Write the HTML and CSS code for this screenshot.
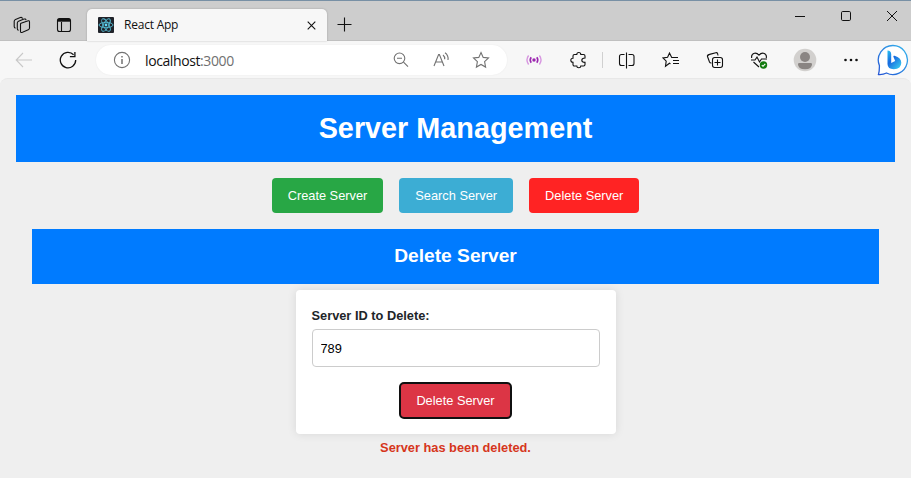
FILE: index.html
```html
<!DOCTYPE html>
<html lang="en">
<head>
<meta charset="utf-8">
<title>React App</title>
<link rel="stylesheet" href="styles.css">
</head>
<body>
<header class="browser">
  <div class="tabbar">
    <div class="tab-tools">
      <svg class="icon workspaces" viewBox="0 0 18 18"><path d="M8 7.300l6.500-2.400q2-.7 2 1.100v6q0 1.200-1.200 1.700l-5.800 2.600q-2 .8-2-1V8.300q0-.7.5-1z"/><path d="M13 4.200q-.3-1.700-2-1.100L5.500 5.200Q4.300 5.700 4.300 7v5.800q0 1.300 1.400 1.500M9.600 2.600q-.6-1.600-2.300-1L2.500 3.400Q1.200 3.900 1.200 5.300v5.200q0 1.300 1.300 1.600"/></svg>
      <svg class="icon" viewBox="0 0 16 16"><rect x="1.500" y="1.500" width="13" height="13" rx="2"/><path d="M5.500 5v9"/><path d="M2 3.300h12" stroke-width="2.800"/></svg>
    </div>
    <div class="tab">
      <svg class="favicon" viewBox="0 0 16 16"><rect width="16" height="16" rx="1" fill="#20232a"/><g fill="none" stroke="#55bdd5" stroke-width=".9"><ellipse cx="8" cy="8" rx="7" ry="2.700"/><ellipse cx="8" cy="8" rx="7" ry="2.700" transform="rotate(60 8 8)"/><ellipse cx="8" cy="8" rx="7" ry="2.700" transform="rotate(120 8 8)"/></g><circle cx="8" cy="8" r="1.400" fill="#61dafb"/></svg>
      <span class="tab-title">React App</span>
      <svg class="tab-close" viewBox="0 0 9 9"><path d="M.7.7l7.600 7.600M8.300.7L.7 8.300"/></svg>
    </div>
    <svg class="new-tab" viewBox="0 0 15 15"><path d="M7.500.5v14M.5 7.500h14"/></svg>
    <div class="window-controls">
      <svg viewBox="0 0 12 12"><path d="M1 6.500h10"/></svg>
      <svg viewBox="0 0 12 12"><rect x="1.500" y="1.500" width="9" height="9" rx="1.200"/></svg>
      <svg viewBox="0 0 12 12"><path d="M1 1l10 10M11 1L1 11"/></svg>
    </div>
  </div>
  <div class="toolbar">
    <svg class="back" viewBox="0 0 18 18"><path d="M17 9H1.500M8 2L1.200 9 8 16"/></svg>
    <svg class="reload" viewBox="0 0 18 18"><path d="M16.700 9A7.700 7.700 0 1 1 14.600 3.800M15.900 1v4.600h-5"/></svg>
    <div class="address">
      <svg class="info" viewBox="0 0 18 18"><circle cx="9" cy="9" r="7.600"/><path d="M9 8v5M9 5v1.500" stroke-width="1.500"/></svg>
      <span class="url">localhost<span class="port">:3000</span></span>
      <div class="address-tools">
        <svg viewBox="0 0 18 18"><circle cx="7.500" cy="7.300" r="5.300"/><path d="M5 7.300h5M11.500 11.200l4.500 4.500"/></svg>
        <svg viewBox="0 0 18 18"><path d="M2 15L6.600 3.500h.8L12 15M3.700 11h6.600M11 4q2 1.600 1.700 4.200M13 1.800q3.700 2.700 3 7.200"/></svg>
        <svg viewBox="0 0 18 18"><path d="M9 1.500l2.200 4.900 5.300.6-3.900 3.700 1 5.400L9 13.500l-4.600 2.600 1-5.400L1.500 7l5.300-.6z"/></svg>
      </div>
    </div>
    <div class="actions">
      <div class="slot"><svg class="broadcast" viewBox="0 0 18 18"><circle cx="9" cy="9" r="1.700" fill="#9c27b0" stroke="none"/><path d="M6.200 6.300q-2 2.700 0 5.400M11.800 6.300q2 2.700 0 5.400" stroke-width="1.600"/><path class="faint" d="M3.600 4.500q-3.300 4.500 0 9M14.400 4.500q3.300 4.500 0 9" stroke-width="1.400"/></svg></div>
      <div class="slot"><svg viewBox="0 0 18 18"><path d="M5.500 3.500h2.300q0-2 2-2t2 2h2.700q1.500 0 1.500 1.500v2q-3.200 0-3.200 2.200t3.200 2.200V13.500q0 1.500-1.500 1.500h-2.700q0 1.800-2 1.800t-2-1.800H5.500Q4 15 4 13.500V11.200q-2.200 0-2.200-2T4 7.200V5q0-1.500 1.500-1.500z"/></svg></div>
      <span class="divider"></span>
      <div class="slot"><svg viewBox="0 0 18 18"><path d="M6.500 3.500H3.500Q1.500 3.500 1.500 5.500v7q0 2 2 2h3M10.500 3.500h3.500q2 0 2 2v7q0 2-2 2h-3.500M8.500 1.500v16"/></svg></div>
      <div class="slot"><svg viewBox="0 0 18 18"><path d="M8.500 12.700L7.500 12.200l-4 3 .7-5.100L1 7l4.600-.7L7.500 2l2.200 4.500H16M11 9.500h6M11 12.500h6"/></svg></div>
      <div class="slot"><svg viewBox="0 0 18 18"><rect x="6.500" y="6.500" width="10" height="10" rx="2.200"/><path d="M11.500 8.500v6M8.500 11.500h6M12 4.500l-.4-1.800q-.4-1.300-1.800-1L3.600 3.400q-1.300.4-2 1.700M1.300 5l2.200 6q.5 1.200 2 1M1.300 5q.2-1.200 1.300-1.500"/></svg></div>
      <div class="slot"><svg viewBox="0 0 18 18"><path d="M1.700 7Q1 3 4.500 2.200 7 1.800 9 4.200q2-2.400 4.500-2Q17 3 16.300 7M1 9h4l2-3 2.500 5 2-3H17M3.500 11l5.500 5"/><circle cx="13.500" cy="14" r="3.700" fill="#137b10" stroke="none"/><path d="M11.800 14.200l1.200 1.100 2.300-2.500" stroke="#fff"/></svg></div>
      <div class="slot avatar-slot"><svg class="avatar" viewBox="0 0 24 24"><circle cx="12" cy="12" r="11.300" fill="#d2d0ce"/><circle cx="12" cy="9" r="5" fill="#8a8583"/><path d="M5 16.200q0-1.200 1.200-1.200h11.600q1.200 0 1.200 1.200 0 5-7 5t-7-5z" fill="#8a8583"/></svg></div>
      <div class="slot dots-slot"><svg viewBox="0 0 18 18"><g fill="#111" stroke="none"><circle cx="3.500" cy="9" r="1.300"/><circle cx="9" cy="9" r="1.300"/><circle cx="14.500" cy="9" r="1.300"/></g></svg></div>
      <svg class="bing" viewBox="0 0 32 32"><defs><linearGradient id="rim" x1="1" y1="0" x2="0" y2="1"><stop stop-color="#35b7ee"/><stop offset="1" stop-color="#2454d4"/></linearGradient><linearGradient id="bee" x1="0" y1="0" x2=".8" y2="1"><stop stop-color="#29c2f2"/><stop offset=".45" stop-color="#1769df"/><stop offset="1" stop-color="#38c9ef"/></linearGradient></defs><path d="M16 1.500a14.500 14.500 0 1 1-6.500 27.500q-3.500 1.800-8 1.500 1-3.500.9-9A14.500 14.500 0 0 1 16 1.500z" fill="#fff" stroke="url(#rim)" stroke-width="1.300"/><path d="M10.500 6.500q3.500.4 3.700 3.500v9l4-2-1.800-4.200q-.4-1.600 1.200-1 6.700 2 6.700 7 0 6.200-7.600 6.400-6 0-6.200-5.200z" fill="url(#bee)"/></svg>
    </div>
  </div>
</header>
<main class="page">
  <h1 class="page-title">Server Management</h1>
  <nav class="menu">
    <button class="btn create">Create Server</button>
    <button class="btn search">Search Server</button>
    <button class="btn delete">Delete Server</button>
  </nav>
  <section class="delete-view">
    <h2 class="section-title">Delete Server</h2>
    <form class="card">
      <label class="label" for="server-id">Server ID to Delete:</label>
      <input class="input" id="server-id" type="text" value="789">
      <button class="btn submit" type="button">Delete Server</button>
    </form>
    <p class="message">Server has been deleted.</p>
  </section>
</main>
</body>
</html>
```
FILE: styles.css
```css
* { box-sizing: border-box; }
body {
  margin: 0;
  height: 478px;
  overflow: hidden;
  background: #f7f7f7;
  font-family: "Liberation Sans", Arial, sans-serif;
}
svg { display: block; flex: none; fill: none; stroke: #111; stroke-width: 1.1; }

.browser { font-family: "Noto Sans", "Open Sans", sans-serif; }
.tabbar {
  display: flex;
  height: 41px;
  background: #cdcdcd;
  border-top: 1px solid #7890a5;
  border-bottom: 1px solid #c0c0c0;
}
.tab-tools { display: flex; align-items: center; width: 87px; padding: 8px 0 0 13px; gap: 25px; }
.icon { width: 16px; height: 16px; }
.icon.workspaces { width: 18px; height: 18px; }
.tab {
  display: flex;
  align-items: center;
  width: 240px;
  height: 32px;
  margin-top: 8px;
  padding: 0 11px;
  border-radius: 5px 5px 0 0;
  background: #f7f7f7;
  box-shadow: 0 0 2px rgba(0, 0, 0, .25);
}
.favicon { width: 16px; height: 16px; stroke: none; }
.tab-title { margin-left: 10px; padding-bottom: 2px; font-family: "Open Sans", sans-serif; font-size: 12px; letter-spacing: -.22px; color: #111; }
.tab-close { width: 9px; height: 9px; margin-left: auto; }
.new-tab { width: 15px; height: 15px; margin: 16px 0 0 10px; }
.window-controls { display: flex; gap: 34px; margin: 9px 13px 0 auto; }
.window-controls svg { width: 12px; height: 12px; stroke-width: 1; }

.toolbar { display: flex; height: 37px; align-items: center; padding: 1px 0 0 15px; background: #f7f7f7; }
.back { width: 18px; height: 18px; stroke: #c8c8c8; }
.reload { width: 18px; height: 18px; margin-left: 26px; stroke-width: 1.3; }
.address {
  display: flex;
  align-items: center;
  width: 411px;
  height: 30px;
  margin-left: 19px;
  padding: 0 17px;
  border-radius: 15px;
  background: #fff;
  box-shadow: 0 0 2px rgba(0, 0, 0, .06);
}
.address svg { width: 18px; height: 18px; stroke: #727272; }
.url { margin-left: 14px; font-family: "Open Sans", sans-serif; font-size: 14px; letter-spacing: -.4px; color: #111; }
.port { color: #707070; }
.address-tools { display: flex; gap: 22px; margin-left: auto; }
.actions { display: flex; align-items: center; margin-left: 5px; }
.slot { display: flex; justify-content: center; width: 44px; }
.slot svg { width: 18px; height: 18px; }
.slot .broadcast { stroke: #9c27b0; }
.broadcast .faint { stroke: #d796e0; }
.slot .avatar { width: 24px; height: 24px; stroke: none; }
.avatar-slot, .dots-slot { margin-left: 2px; }
.divider { width: 1px; height: 16px; margin: 0 2px; background: #d0d0d0; }
.bing { width: 32px; height: 32px; margin-left: 4px; stroke: none; }

.page {
  height: 400px;
  padding: 16px;
  border: solid #e8e8e8;
  border-width: 1px 0 0;
  border-radius: 8px 8px 0 0;
  background: #efefef;
}
.page-title {
  height: 67px;
  margin: 0;
  background: #007bff;
  color: #fff;
  font-size: 28.8px;
  line-height: 66px;
  text-align: center;
}
.menu { display: flex; justify-content: center; gap: 16px; margin: 16px 0; }
.btn {
  height: 35px;
  padding: 0 16px;
  border: 0;
  border-radius: 4px;
  color: #fff;
  font: 12.8px "Liberation Sans", Arial, sans-serif;
}
.create { background: #28a745; }
.search { background: #3cadd4; }
.delete { background: #ff2323; }
.delete-view { padding: 0 16px; }
.section-title {
  height: 55px;
  margin: 0 0 6px;
  background: #007bff;
  color: #fff;
  font-size: 19.2px;
  line-height: 54px;
  text-align: center;
}
.card {
  display: flex;
  flex-direction: column;
  width: 320px;
  height: 144px;
  margin: 0 auto;
  padding: 16px 16px 15px;
  border-radius: 4px;
  background: #fff;
  box-shadow: 0 0 10px rgba(0, 0, 0, .1);
}
.label { height: 23px; color: #212529; font-size: 12.8px; font-weight: bold; line-height: 19px; }
.input {
  flex: none;
  width: 100%;
  height: 38px;
  padding: 0 8px;
  border: 1px solid #ccc;
  border-radius: 4px;
  background: #fff;
  color: #000;
  font: 12.8px "Liberation Sans", Arial, sans-serif;
}
.submit {
  flex: none;
  align-self: center;
  width: 113px;
  height: 37px;
  margin-top: 15px;
  padding: 0;
  border: 2px solid #101010;
  border-radius: 5px;
  background: #dc3545;
}
.message { margin: 4px 0 0; color: #d6361c; font-size: 12.8px; font-weight: bold; line-height: 19px; text-align: center; }
```
